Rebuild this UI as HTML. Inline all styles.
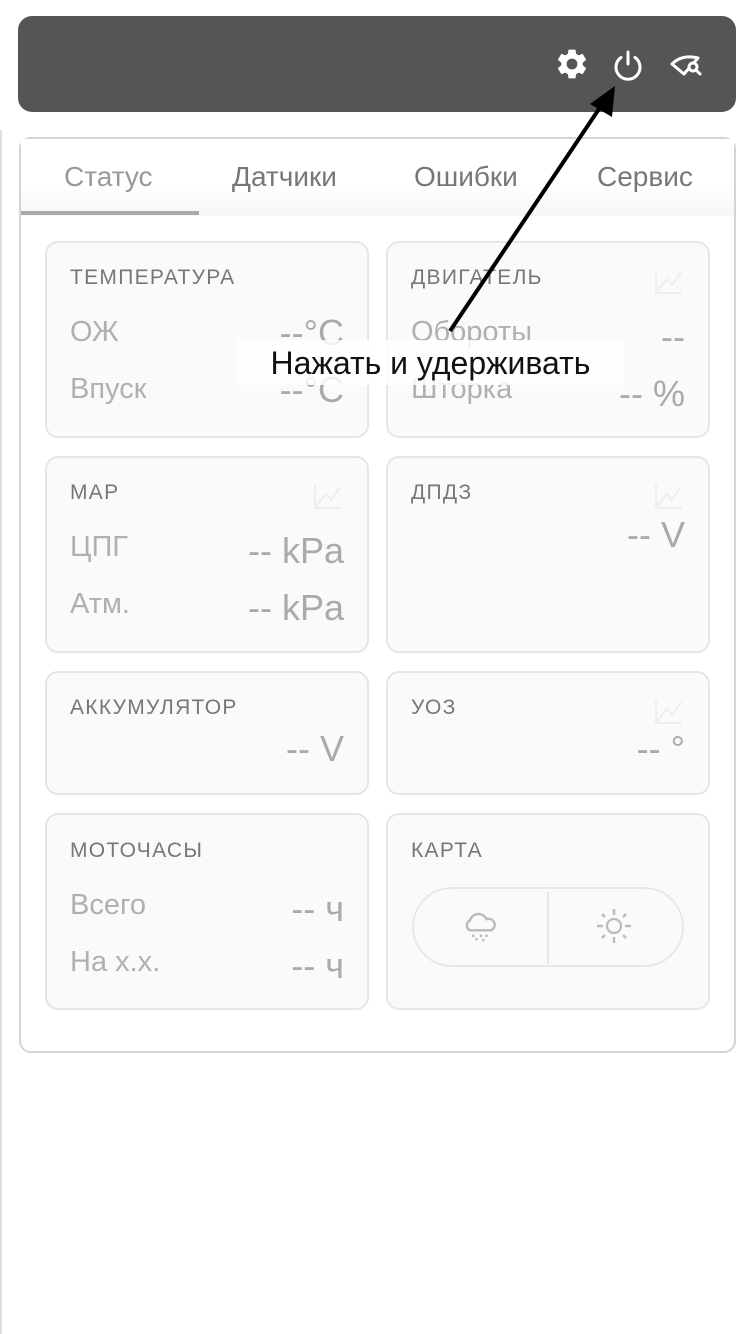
<!DOCTYPE html>
<html><head><meta charset="utf-8"><style>
*{margin:0;padding:0;box-sizing:border-box}
body{width:752px;height:1334px;background:#fff;font-family:"Liberation Sans",sans-serif;position:relative;overflow:hidden}
.a{position:absolute}
.hdr{left:18px;top:16px;width:718px;height:96px;background:#555;border-radius:14px}
.panel{left:19px;top:137px;width:717px;height:916px;border:2px solid #d4d4d4;border-radius:12px;background:#fff}
.tabbar{left:21px;top:139px;width:713px;height:77px;background:linear-gradient(#fff 60%,#f6f6f6)}
.tab{top:159px;height:36px;line-height:36px;font-size:28px;color:#777}
.card{background:#fafafa;border:2px solid #e6e6e6;border-radius:13px}
.t{font-size:21px;color:#777;letter-spacing:1.3px;height:24px;line-height:24px}
.l{font-size:29px;color:#b0b0b0;height:32px;line-height:32px}
.v{font-size:36px;color:#aaa;height:38px;line-height:38px;text-align:right}
</style></head><body>
<div class="a" style="left:0;top:130px;width:2px;height:1204px;background:#ddd"></div>
<div class="a hdr"></div>
<svg class="a" style="left:554px;top:46px" width="36" height="36" viewBox="0 0 24 24"><path fill="#fff" d="M19.14 12.94c.04-.3.06-.61.06-.94 0-.32-.02-.64-.07-.94l2.030-1.58a.49.49 0 0 0 .12-.61l-1.92-3.32a.49.49 0 0 0-.59-.22l-2.39.96c-.5-.38-1.03-.7-1.62-.94l-.36-2.54a.48.48 0 0 0-.48-.41h-3.84c-.24 0-.43.17-.47.41l-.36 2.54c-.59.24-1.13.57-1.62.94l-2.39-.96a.48.48 0 0 0-.59.22L2.74 8.87c-.12.21-.08.47.12.61l2.03 1.58c-.05.3-.09.63-.09.94s.02.64.07.94l-2.03 1.58a.49.49 0 0 0-.12.61l1.92 3.32c.12.22.37.29.59.22l2.39-.96c.5.38 1.03.7 1.62.94l.36 2.54c.05.24.24.41.48.41h3.84c.24 0 .44-.17.47-.41l.36-2.54c.59-.24 1.13-.56 1.62-.94l2.39.96c.22.08.47 0 .59-.22l1.92-3.32c.12-.22.07-.47-.12-.61l-2.01-1.58zM12 15.6A3.6 3.6 0 1 1 12 8.4a3.6 3.6 0 0 1 0 7.2z"/></svg>
<svg class="a" style="left:610px;top:48px" width="36" height="36" viewBox="0 0 36 36"><path d="M11 9.5A12 12 0 1 0 25 9.5" fill="none" stroke="#fff" stroke-width="3" stroke-linecap="round"/><line x1="18" y1="4" x2="18" y2="16" stroke="#fff" stroke-width="3" stroke-linecap="round"/></svg>
<svg class="a" style="left:668px;top:50px" width="40" height="30" viewBox="0 0 40 30"><path d="M4 14 Q14 4 30 8 L16 24 Z" fill="none" stroke="#fff" stroke-width="3" stroke-linejoin="round"/><circle cx="25" cy="17" r="4" fill="#555" stroke="#fff" stroke-width="3"/><line x1="28" y1="20" x2="32" y2="24" stroke="#fff" stroke-width="3" stroke-linecap="round"/></svg>

<div class="a panel"></div>
<div class="a tabbar"></div>
<div class="a tab" style="left:64px;color:#999">Статус</div>
<div class="a tab" style="left:232px">Датчики</div>
<div class="a tab" style="left:414px">Ошибки</div>
<div class="a tab" style="left:597px">Сервис</div>
<div class="a" style="left:21px;top:211px;width:178px;height:4px;background:#aaa"></div>

<div class="a card" style="left:45px;top:241px;width:324px;height:197px"></div>
<div class="a card" style="left:386px;top:241px;width:324px;height:197px"></div>
<div class="a card" style="left:45px;top:456px;width:324px;height:197px"></div>
<div class="a card" style="left:386px;top:456px;width:324px;height:197px"></div>
<div class="a card" style="left:45px;top:671px;width:324px;height:124px"></div>
<div class="a card" style="left:386px;top:671px;width:324px;height:124px"></div>
<div class="a card" style="left:45px;top:813px;width:324px;height:197px"></div>
<div class="a card" style="left:386px;top:813px;width:324px;height:197px"></div>

<div class="a t" style="left:70px;top:266px">ТЕМПЕРАТУРА</div>
<div class="a l" style="left:70px;top:316px">ОЖ</div>
<div class="a v" style="left:180px;width:164px;top:314px">--°C</div>
<div class="a l" style="left:70px;top:373px">Впуск</div>
<div class="a v" style="left:180px;width:164px;top:371px">--°C</div>

<div class="a t" style="left:411px;top:266px">ДВИГАТЕЛЬ</div>
<div class="a l" style="left:411px;top:316px">Обороты</div>
<div class="a v" style="left:540px;width:145px;top:318px">--</div>
<div class="a l" style="left:411px;top:373px">Шторка</div>
<div class="a v" style="left:540px;width:145px;top:375px">-- %</div>

<div class="a t" style="left:70px;top:481px">MAP</div>
<div class="a l" style="left:70px;top:531px">ЦПГ</div>
<div class="a v" style="left:180px;width:164px;top:532px">-- kPa</div>
<div class="a l" style="left:70px;top:588px">Атм.</div>
<div class="a v" style="left:180px;width:164px;top:589px">-- kPa</div>

<div class="a t" style="left:411px;top:481px">ДПДЗ</div>
<div class="a v" style="left:540px;width:145px;top:516px">-- V</div>

<div class="a t" style="left:70px;top:696px">АККУМУЛЯТОР</div>
<div class="a v" style="left:180px;width:164px;top:730px">-- V</div>

<div class="a t" style="left:411px;top:696px">УОЗ</div>
<div class="a v" style="left:540px;width:145px;top:730px">-- °</div>

<div class="a t" style="left:70px;top:839px">МОТОЧАСЫ</div>
<div class="a l" style="left:70px;top:889px">Всего</div>
<div class="a v" style="left:180px;width:164px;top:890px">-- ч</div>
<div class="a l" style="left:70px;top:946px">На х.х.</div>
<div class="a v" style="left:180px;width:164px;top:947px">-- ч</div>

<div class="a t" style="left:411px;top:839px">КАРТА</div>
<div class="a" style="left:412px;top:887px;width:272px;height:80px;border:2px solid #e8e8e8;border-radius:40px"></div>
<div class="a" style="left:547px;top:892px;width:2px;height:72px;background:#e6e6e6"></div>
<svg class="a" style="left:460px;top:906px" width="42" height="42" viewBox="0 0 38 38"><path d="M9 22 A5 5 0 0 1 9 13 A8 8 0 0 1 24 12 A5 5 0 0 1 28 22 Z" fill="none" stroke="#bbb" stroke-width="2.2" stroke-linejoin="round"/><g fill="#bbb"><circle cx="12" cy="27" r="1.2"/><circle cx="19" cy="27" r="1.2"/><circle cx="24" cy="27" r="1.2"/><circle cx="15" cy="30" r="1.2"/><circle cx="21" cy="31" r="1.2"/></g></svg>
<svg class="a" style="left:594px;top:906px" width="40" height="40" viewBox="0 0 40 40"><circle cx="20" cy="20" r="7" fill="none" stroke="#bbb" stroke-width="2.2"/><g stroke="#bbb" stroke-width="2.5"><line x1="20" y1="3" x2="20" y2="9"/><line x1="20" y1="31" x2="20" y2="37"/><line x1="3" y1="20" x2="9" y2="20"/><line x1="31" y1="20" x2="37" y2="20"/><line x1="8" y1="8" x2="11" y2="11"/><line x1="29" y1="29" x2="32" y2="32"/><line x1="8" y1="32" x2="11" y2="29"/><line x1="29" y1="11" x2="32" y2="8"/></g></svg>

<svg class="a" style="left:0;top:0" width="752" height="1010" viewBox="0 0 752 1010">
<g fill="none" stroke="#eee" stroke-width="2"><path d="M656 270V293H682M657 291L667 279L672 285L681 272"/><path d="M315 485V508H341M316 506L326 494L331 500L340 487"/><path d="M656 485V508H682M657 506L667 494L672 500L681 487"/><path d="M656 700V723H682M657 721L667 709L672 715L681 702"/></g>
<line x1="450" y1="331" x2="603" y2="103" stroke="#000" stroke-width="4"/>
<path d="M615 86L590 104L612 117Z" fill="#000"/>
</svg>

<div class="a" style="left:237px;top:340px;width:387px;height:45px;background:rgba(255,255,255,.82)"></div>
<div class="a" style="left:237px;top:344px;width:387px;height:38px;line-height:38px;font-size:32px;color:#111;text-align:center">Нажать и удерживать</div>
</body></html>
